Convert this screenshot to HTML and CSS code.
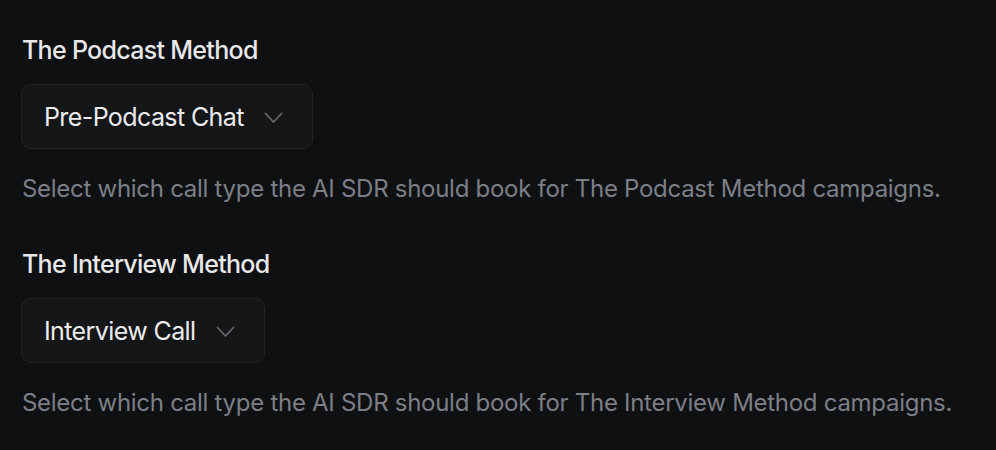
FILE: index.html
```html
<!DOCTYPE html>
<html>
<head>
    <title>AI SDR Call Types</title>
    <link rel="stylesheet" href="styles.css">
</head>
<body>
    <div class="settings">
        <div class="field">
            <label class="field-label">The Podcast Method</label>
            <button class="select">
                <span>Pre-Podcast Chat</span>
                <svg class="chevron" width="19" height="12" viewBox="0 0 19 12" fill="none" stroke="currentColor" stroke-width="1.8" stroke-linecap="round" stroke-linejoin="round"><path d="M1.5 1.5 9.5 10 17.5 1.5"/></svg>
            </button>
            <p class="hint">Select which call type the AI SDR should book for The Podcast Method campaigns.</p>
        </div>

        <div class="field">
            <label class="field-label">The Interview Method</label>
            <button class="select">
                <span>Interview Call</span>
                <svg class="chevron" width="19" height="12" viewBox="0 0 19 12" fill="none" stroke="currentColor" stroke-width="1.8" stroke-linecap="round" stroke-linejoin="round"><path d="M1.5 1.5 9.5 10 17.5 1.5"/></svg>
            </button>
            <p class="hint">Select which call type the AI SDR should book for The Interview Method campaigns.</p>
        </div>
    </div>
</body>
</html>
```

FILE: styles.css
```css
body { margin: 0; background: #0f1012; font-family: Inter, "Noto Sans", sans-serif; }
.settings { padding: 34px 22px 0 21px; display: flex; flex-direction: column; gap: 43px; }
.field { display: flex; flex-direction: column; align-items: flex-start; }
.field-label { margin-left: 1px; font-size: 25px; line-height: 32px; font-weight: 500; color: #e8e8ea; letter-spacing: -0.7px; }
.select { margin-top: 18px; height: 65px; display: flex; align-items: center; gap: 20px; padding: 0 29px 0 22px; background: #151618; border: 1px solid #232427; border-radius: 10px; color: #ececee; font-family: inherit; font-size: 25px; letter-spacing: -0.6px; }
.chevron { color: #66686d; margin-top: 2px; }
.hint { margin: 24px 0 0 1px; font-size: 24px; line-height: 32px; color: #7c7f86; letter-spacing: -0.28px; }
```
